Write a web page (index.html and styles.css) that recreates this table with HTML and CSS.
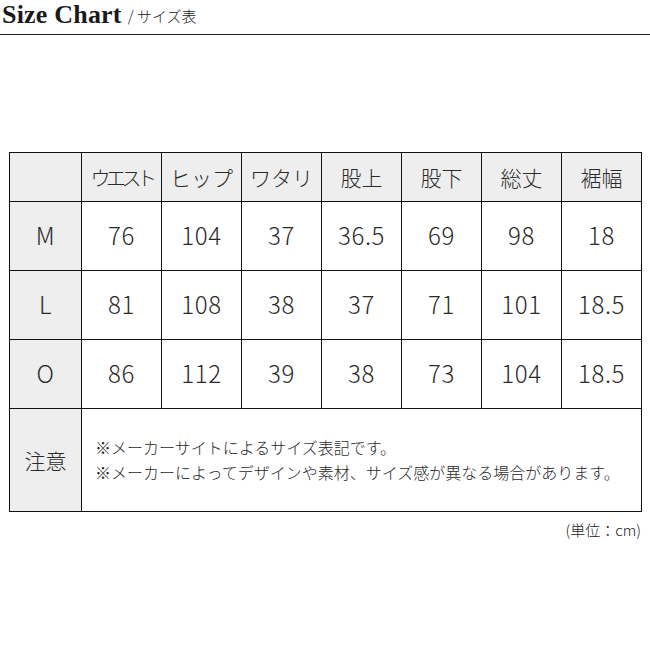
FILE: index.html
```html
<!DOCTYPE html>
<html lang="ja">
<head>
<meta charset="utf-8">
<link rel="stylesheet" href="styles.css">
</head>
<body>
<div class="title">
  <span class="title-en">Size Chart</span><span class="title-ja">/ サイズ表</span>
</div>
<table class="chart">
  <tr class="head">
    <th class="first"></th>
    <th class="narrow">ウエスト</th>
    <th>ヒップ</th>
    <th>ワタリ</th>
    <th>股上</th>
    <th>股下</th>
    <th>総丈</th>
    <th>裾幅</th>
  </tr>
  <tr class="data">
    <th class="first">M</th><td>76</td><td>104</td><td>37</td><td>36.5</td><td>69</td><td>98</td><td>18</td>
  </tr>
  <tr class="data">
    <th class="first">L</th><td>81</td><td>108</td><td>38</td><td>37</td><td>71</td><td>101</td><td>18.5</td>
  </tr>
  <tr class="data">
    <th class="first">O</th><td>86</td><td>112</td><td>39</td><td>38</td><td>73</td><td>104</td><td>18.5</td>
  </tr>
  <tr class="notes">
    <th class="first">注意</th>
    <td colspan="7">※メーカーサイトによるサイズ表記です。<br>※メーカーによってデザインや素材、サイズ感が異なる場合があります。</td>
  </tr>
</table>
<div class="unit">(単位：cm)</div>
</body>
</html>
```
FILE: styles.css
```css
html, body {
  margin: 0;
  padding: 0;
  background: #fff;
  color: #222;
  font-family: "Noto Sans CJK JP", "Noto Sans", sans-serif;
}
.title {
  height: 34px;
  border-bottom: 1px solid #222;
  padding-left: 2px;
  display: flex;
  align-items: flex-end;
}
.title-en {
  font-family: "Liberation Serif", serif;
  font-weight: bold;
  font-size: 26px;
  line-height: 30px;
  letter-spacing: 0.2px;
  margin-bottom: 4px;
  color: #1a1a1a;
}
.title-ja {
  font-size: 15px;
  font-weight: 300;
  line-height: 20px;
  margin-left: 6px;
  margin-bottom: 8px;
}
.chart {
  border-collapse: collapse;
  margin: 117px 0 0 9px;
  table-layout: fixed;
}
.chart th, .chart td {
  border: 1px solid #111;
  padding: 0;
  text-align: center;
  font-weight: 300;
  width: 79px;
  color: #2a2a2a;
}
.chart .first {
  width: 71px;
}
.head th {
  background: #eeeeee;
  height: 48px;
  font-size: 21px;
}
.head .narrow {
  letter-spacing: -4.5px;
  font-size: 20px;
}
.data td, .data th {
  height: 66px;
  font-size: 24px;
  line-height: 30px;
  letter-spacing: 0.6px;
  padding-bottom: 2px;
}
.data th, .notes th {
  background: #eeeeee;
}
.notes th {
  height: 102px;
  font-size: 21px;
}
.notes td {
  text-align: left;
  padding-left: 13px;
  font-size: 16px;
  line-height: 25px;
}
.unit {
  width: 641px;
  text-align: right;
  font-size: 15px;
  font-weight: 300;
  margin-top: 7px;
}
```
